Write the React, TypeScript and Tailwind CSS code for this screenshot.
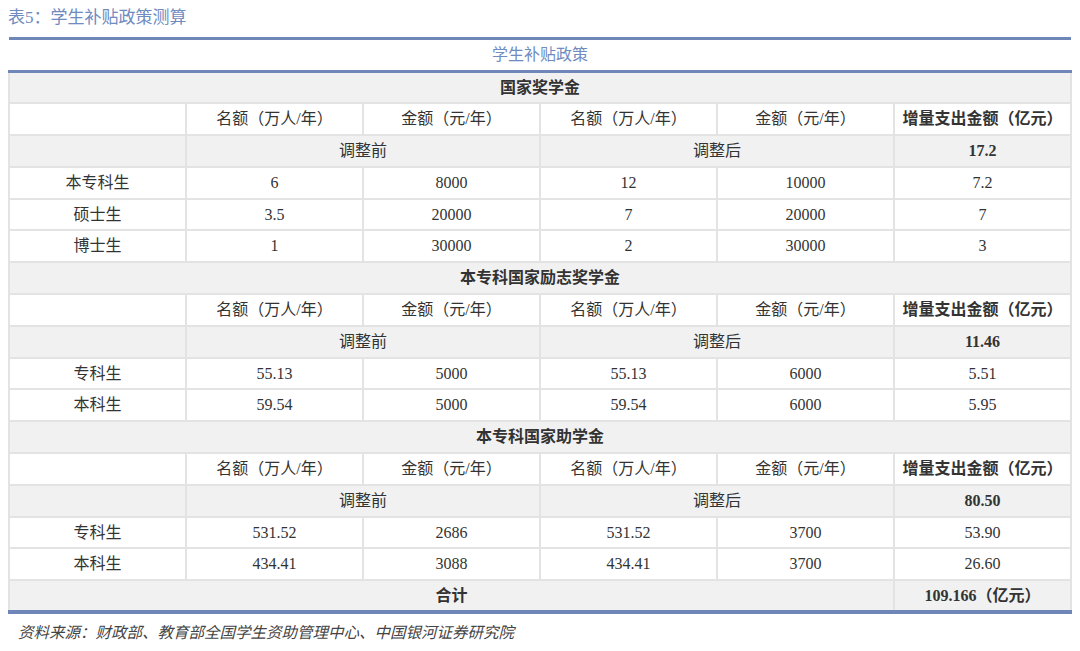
const font = { fontFamily: '"Liberation Serif", "Noto Sans CJK SC", serif' };

type Block = {
  title: string;
  total: string;
  rows: string[][];
};

const blocks: Block[] = [
  {
    title: "国家奖学金",
    total: "17.2",
    rows: [
      ["本专科生", "6", "8000", "12", "10000", "7.2"],
      ["硕士生", "3.5", "20000", "7", "20000", "7"],
      ["博士生", "1", "30000", "2", "30000", "3"],
    ],
  },
  {
    title: "本专科国家励志奖学金",
    total: "11.46",
    rows: [
      ["专科生", "55.13", "5000", "55.13", "6000", "5.51"],
      ["本科生", "59.54", "5000", "59.54", "6000", "5.95"],
    ],
  },
  {
    title: "本专科国家助学金",
    total: "80.50",
    rows: [
      ["专科生", "531.52", "2686", "531.52", "3700", "53.90"],
      ["本科生", "434.41", "3088", "434.41", "3700", "26.60"],
    ],
  },
];

const td = "border-2 border-[#e3e3e3] text-center h-[31.8px] p-0";
const gray = "bg-[#f1f1f1]";

export default function App() {
  return (
    <div className="w-[1080px] h-[651px] bg-white text-[16px] text-[#333]" style={font}>
      <div className="px-[8px] pt-[5px] h-[37px] text-[#6f8bbf] text-[17px]">表5：学生补贴政策测算</div>
      <table className="mx-[8px] w-[1064px] border-collapse table-fixed border-t-[3px] border-b-[4px] border-t-[#6f86b9] border-b-[#6f86b9]">
        <tbody>
          <tr>
            <td colSpan={6} className="h-[33px] text-center text-[#6f8bbf] border-b-[3px] border-b-[#6f86b9]">学生补贴政策</td>
          </tr>
          {blocks.map((b) => (
            <>
              <tr key={b.title + "t"} className={gray}>
                <td colSpan={6} className={`${td} font-bold`}>{b.title}</td>
              </tr>
              <tr key={b.title + "h"}>
                <td className={td}></td>
                <td className={td}>名额（万人/年）</td>
                <td className={td}>金额（元/年）</td>
                <td className={td}>名额（万人/年）</td>
                <td className={td}>金额（元/年）</td>
                <td className={`${td} font-bold`}>增量支出金额（亿元）</td>
              </tr>
              <tr key={b.title + "a"} className={gray}>
                <td className={td}></td>
                <td colSpan={2} className={td}>调整前</td>
                <td colSpan={2} className={td}>调整后</td>
                <td className={`${td} font-bold`}>{b.total}</td>
              </tr>
              {b.rows.map((r) => (
                <tr key={b.title + r[0]}>
                  {r.map((c, i) => (
                    <td key={i} className={td}>{c}</td>
                  ))}
                </tr>
              ))}
            </>
          ))}
          <tr className={gray}>
            <td colSpan={5} className={`${td} font-bold`}>合计</td>
            <td className={`${td} font-bold`}>109.166（亿元）</td>
          </tr>
        </tbody>
      </table>
      <div className="px-[18px] pt-[7px] text-[15.5px] italic text-[#444]">资料来源：财政部、教育部全国学生资助管理中心、中国银河证券研究院</div>
    </div>
  );
}
